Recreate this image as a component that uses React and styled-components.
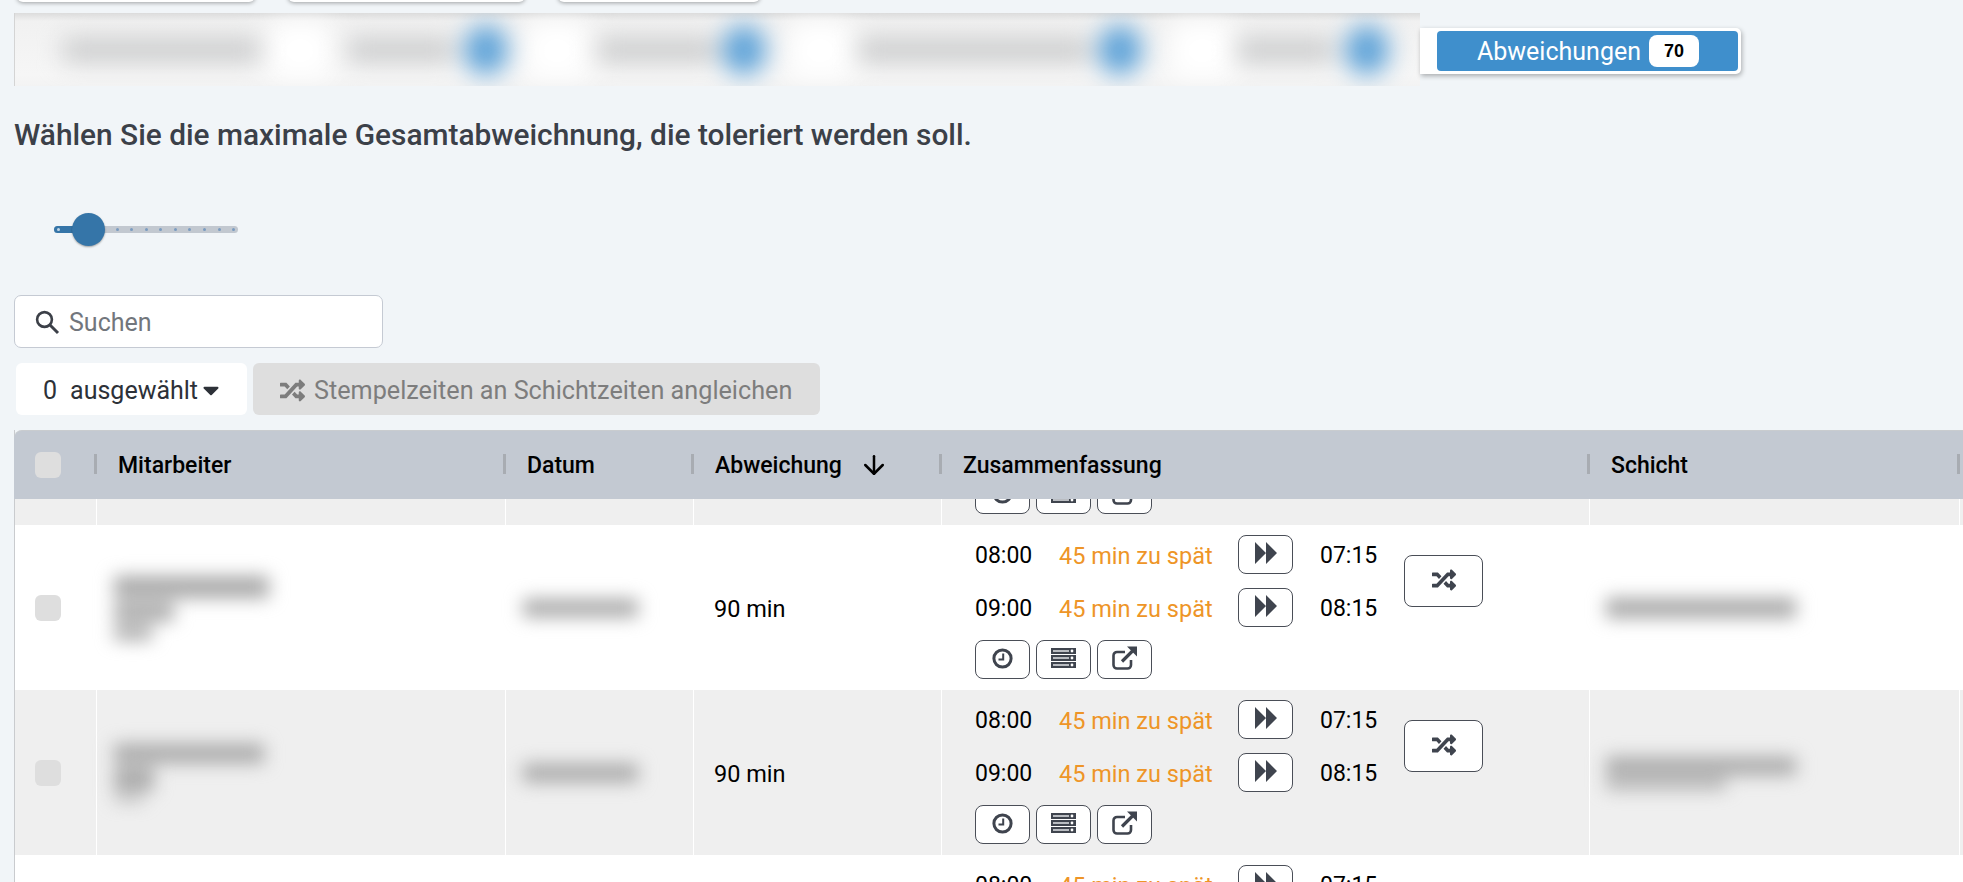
import React from 'react';
import styled, { createGlobalStyle } from 'styled-components';
import { FaRandom, FaCaretDown } from 'react-icons/fa';
import { FiArrowDown } from 'react-icons/fi';

const COLUMNS = '82px 409px 188px 248px 648px 370px 60px';

const GlobalStyle = createGlobalStyle`
  html, body {
    margin: 0;
    height: 882px;
    overflow: hidden;
    background: #f1f5f8;
    font-family: Roboto, "Liberation Sans", sans-serif;
  }
`;

const Page = styled.div`
  padding-left: 14px;
  width: 1963px;
  height: 882px;
  overflow: hidden;
  box-sizing: border-box;
`;

const TopCards = styled.div`
  display: flex;
  margin: -38px 0 0 3px;
`;

const TopCard = styled.div`
  width: ${p => p.$w}px;
  height: 40px;
  margin-right: 33px;
  background: #fff;
  border-radius: 6px;
  box-shadow: 0 1px 4px rgba(0, 0, 0, 0.35);
`;

const TabBar = styled.div`
  display: flex;
  margin-top: 11px;
  height: 73px;
`;

const BlurStrip = styled.div`
  width: 1406px;
  height: 73px;
  overflow: hidden;
  background: linear-gradient(#dcdcdc 0, #f1f1f1 8px, #f6f6f6 62px, #f3f3f3 100%);
  border-left: 1px solid #d4d4d4;
  box-sizing: border-box;
`;

const StripContent = styled.div`
  display: flex;
  align-items: center;
  height: 73px;
  padding-left: 9px;
  filter: blur(12px);
`;

const StripWhite = styled.div`
  width: ${p => p.$w}px;
  height: 56px;
  margin-left: ${p => p.$ml}px;
  background: #fff;
  flex-shrink: 0;
`;

const StripLabel = styled.div`
  width: ${p => p.$w}px;
  height: 22px;
  margin-left: ${p => p.$ml}px;
  background: #c8c9ca;
  flex-shrink: 0;
`;

const StripDot = styled.div`
  width: 44px;
  height: 50px;
  margin-left: ${p => p.$ml}px;
  border-radius: 50%;
  background: #5fa3d8;
  flex-shrink: 0;
`;

const DeviationCard = styled.div`
  display: flex;
  align-items: center;
  width: 321px;
  height: 46px;
  margin-top: 15px;
  padding: 0 3px 0 17px;
  box-sizing: border-box;
  background: #fff;
  border-radius: 0 5px 5px 0;
  box-shadow: 1px 2px 5px rgba(0, 0, 0, 0.3);
`;

const DeviationButton = styled.div`
  display: flex;
  align-items: center;
  justify-content: flex-end;
  width: 301px;
  height: 40px;
  padding-right: 39px;
  box-sizing: border-box;
  background: #3f8fcc;
  border-radius: 4px;
  color: #fff;
  font-size: 25px;
`;

const Badge = styled.span`
  display: flex;
  align-items: center;
  justify-content: center;
  width: 50px;
  height: 32px;
  margin-left: 8px;
  background: #fff;
  border-radius: 8px;
  color: #000;
  font-size: 18px;
  font-weight: 700;
  font-family: "Liberation Sans", Arial, sans-serif;
`;

const Heading = styled.h2`
  margin: 33px 0 0;
  height: 32px;
  color: #3b4048;
  font-size: 29.85px;
  line-height: 32px;
  font-weight: 500;
  white-space: nowrap;
`;

const SliderWrap = styled.div`
  position: relative;
  width: 184px;
  height: 7px;
  margin: 75px 0 0 40px;
  background: #c2c8d0;
  border-radius: 4px;
`;

const SliderFill = styled.div`
  width: 36px;
  height: 7px;
  background: #3575a8;
  border-radius: 4px 0 0 4px;
`;

const SliderThumb = styled.div`
  position: absolute;
  left: 17.5px;
  top: -13px;
  width: 33px;
  height: 33px;
  border-radius: 50%;
  background: #3575a8;
  box-shadow: 0 1px 2px rgba(0, 0, 0, 0.35);
`;

const SliderTick = styled.div`
  position: absolute;
  top: 2px;
  width: 3px;
  height: 3px;
  border-radius: 50%;
  background: ${p => (p.$on ? '#c2d6e6' : '#7a9cc0')};
`;

const SearchBox = styled.div`
  display: flex;
  align-items: center;
  width: 369px;
  height: 53px;
  margin-top: 62px;
  padding-left: 19px;
  box-sizing: border-box;
  background: #fff;
  border: 1px solid #c5cad3;
  border-radius: 7px;
`;

const SearchText = styled.span`
  margin-left: 9px;
  padding-top: 2px;
  color: #72767c;
  font-size: 25px;
`;

const Actions = styled.div`
  display: flex;
  gap: 6px;
  margin: 15px 0 0 2px;
`;

const SelectButton = styled.div`
  display: flex;
  align-items: center;
  width: 231px;
  height: 52px;
  padding: 2px 0 0 27px;
  box-sizing: border-box;
  background: #fff;
  border-radius: 6px;
  color: #2d3138;
  font-size: 25px;
`;

const SelectCount = styled.span`
  margin-right: 13px;
`;

const AlignButton = styled.div`
  display: flex;
  align-items: center;
  width: 567px;
  height: 52px;
  padding: 2px 0 0 27px;
  box-sizing: border-box;
  background: #dedede;
  border-radius: 6px;
  color: #7d7d7d;
  font-size: 25.2px;
  white-space: nowrap;

  svg {
    margin-right: 9px;
  }
`;

const Table = styled.div`
  margin-top: 15px;
  width: 1980px;
  border-left: 1px solid #c9cbce;
`;

const HeaderRow = styled.div`
  display: grid;
  grid-template-columns: ${COLUMNS};
  height: 69px;
  margin-left: -1px;
  padding-left: 1px;
  background: #c3c9d2;
  border-top: 1px solid #c9cccf;
  box-sizing: border-box;
  border-radius: 8px 0 0 0;
`;

const HeaderCell = styled.div`
  position: relative;
  display: flex;
  align-items: center;
  padding-left: 21px;
  color: #000;
  font-size: 23px;
  font-weight: 500;
  white-space: nowrap;

  &::before {
    content: ${p => (p.$first ? 'none' : '""')};
    position: absolute;
    left: -3px;
    top: 23px;
    width: 3px;
    height: 20px;
    background: #a8acb2;
  }
`;

const SortArrow = styled.span`
  display: flex;
  margin-left: 17px;
`;

const HeaderCheck = styled.div`
  width: 26px;
  height: 26px;
  margin-left: -1px;
  background: #dedede;
  border-radius: 6px;
`;

const Viewport = styled.div`
  height: 383px;
  overflow: hidden;
`;

const Rows = styled.div`
  margin-top: -139px;
`;

const Row = styled.div`
  display: grid;
  grid-template-columns: ${COLUMNS};
  height: 165px;
  background: ${p => (p.$alt ? '#efefef' : '#fff')};
`;

const Cell = styled.div`
  display: flex;
  align-items: center;
  box-sizing: border-box;
  min-width: 0;
  padding-left: ${p => p.$pl || 0}px;
  border-right: 1px solid ${p => (p.$last ? 'transparent' : '#fff')};
`;

const RowCheck = styled.div`
  width: 26px;
  height: 26px;
  background: #dedede;
  border-radius: 6px;
`;

const BlurStack = styled.div`
  display: flex;
  flex-direction: column;
  gap: ${p => p.$gap || 5}px;
  filter: blur(9px);
`;

const BlurBar = styled.div`
  width: ${p => p.$w}px;
  height: ${p => p.$h || 15}px;
  background: #a8a8a8;
`;

const AmountText = styled.span`
  padding-top: 2px;
  font-size: 23.5px;
  color: #000;
`;

const SummaryCell = styled(Cell)`
  flex-direction: column;
  align-items: flex-start;
  justify-content: flex-start;
  padding: 10px 0 0 33px;
`;

const SummaryTop = styled.div`
  display: flex;
  align-items: center;
`;

const Lines = styled.div`
  display: flex;
  flex-direction: column;
  gap: 14px;
  width: 429px;
`;

const Line = styled.div`
  display: flex;
  align-items: center;
  height: 39px;
  font-size: 23px;
  color: #000;

  > span {
    padding-top: 2px;
  }
`;

const Time = styled.span`
  width: 84px;
`;

const Late = styled.span`
  width: 179px;
  font-size: 23.5px;
  color: #ee9527;
  white-space: nowrap;
`;

const IconButton = styled.div`
  display: flex;
  align-items: center;
  justify-content: center;
  width: ${p => p.$w || 55}px;
  height: ${p => p.$h || 39}px;
  padding-bottom: 3px;
  box-sizing: border-box;
  flex-shrink: 0;
  background: #fff;
  border: 1px solid #4a4e57;
  border-radius: 8px;
  color: #3f444e;
`;

const ForwardButton = styled(IconButton)`
  margin-right: 27px;
`;

const Tools = styled.div`
  display: flex;
  gap: 6px;
  margin-top: 13px;
`;

const ForwardIcon = () => (
  <svg width="22" height="22" viewBox="0 0 22 22" fill="currentColor">
    <path d="M0 0l11 11L0 22zM11 0l11 11-11 11z" />
  </svg>
);

const ClockIcon = () => (
  <svg width="21" height="21" viewBox="0 0 21 21">
    <circle cx="10.5" cy="10.5" r="8.6" fill="none" stroke="currentColor" strokeWidth="3" />
    <path d="M11.2 5.5v6H6.5" fill="none" stroke="currentColor" strokeWidth="2" />
  </svg>
);

const ServerIcon = () => (
  <svg width="25" height="20" viewBox="0 0 25 20" fill="currentColor">
    {[0, 7, 14].map(y => (
      <g key={y}>
        <rect x="0" y={y} width="25" height="6" />
        <rect x="2" y={y + 2.2} width="16" height="1.6" fill="#d8dade" />
        <circle cx="21" cy={y + 3} r="1.4" fill="#fff" />
      </g>
    ))}
  </svg>
);

const ExternalIcon = () => (
  <svg width="25" height="24" viewBox="0 0 25 24">
    <path d="M19 14v5a3.5 3.5 0 0 1-3.5 3.5H5A3.5 3.5 0 0 1 1.5 19V9.5A3.5 3.5 0 0 1 5 6h8" fill="none" stroke="currentColor" strokeWidth="2.6" />
    <path d="M15 .5h10v10z" fill="currentColor" />
    <path d="M20.5 5L10 15.5" stroke="currentColor" strokeWidth="3.2" />
  </svg>
);

const SearchIcon = () => (
  <svg width="26" height="26" viewBox="0 0 26 26">
    <circle cx="10.5" cy="10.5" r="7.4" fill="none" stroke="#3c4048" strokeWidth="2.6" />
    <path d="M16 16l8 8" stroke="#3c4048" strokeWidth="3" />
  </svg>
);

const ticks = [2.5, 61.5, 75.5, 90.5, 104.5, 119.5, 133.5, 148.5, 163.5, 177.5];

const columns = [
  { label: 'Mitarbeiter' },
  { label: 'Datum' },
  { label: 'Abweichung', sorted: true },
  { label: 'Zusammenfassung' },
  { label: 'Schicht' },
  { label: '' },
];

const rows = [
  { id: 0, alt: true, name: [[155, 14], [60, 14]], shift: [[190, 20]] },
  { id: 1, alt: false, name: [[155, 22], [60, 18], [38, 14]], shift: [[190, 20]] },
  { id: 2, alt: true, name: [[150, 19], [40, 22], [30, 6]], shift: [[190, 18], [120, 10]] },
  { id: 3, alt: false, name: [[155, 14], [60, 14]], shift: [[190, 20]] },
];

const Summary = () => (
  <SummaryCell>
    <SummaryTop>
      <Lines>
        {[['08:00', '07:15'], ['09:00', '08:15']].map(([planned, actual]) => (
          <Line key={planned}>
            <Time>{planned}</Time>
            <Late>45 min zu spät</Late>
            <ForwardButton><ForwardIcon /></ForwardButton>
            <span>{actual}</span>
          </Line>
        ))}
      </Lines>
      <IconButton $w={79} $h={52}><FaRandom size={24} /></IconButton>
    </SummaryTop>
    <Tools>
      <IconButton><ClockIcon /></IconButton>
      <IconButton><ServerIcon /></IconButton>
      <IconButton><ExternalIcon /></IconButton>
    </Tools>
  </SummaryCell>
);

const App = () => (
  <Page>
    <GlobalStyle />
    <TopCards>
      <TopCard $w={238} />
      <TopCard $w={237} />
      <TopCard $w={202} />
    </TopCards>
    <TabBar>
      <BlurStrip>
        <StripContent>
          <StripLabel $w={197} $ml={39} />
          <StripWhite $w={60} $ml={10} />
          <StripLabel $w={105} $ml={18} />
          <StripDot $ml={11} />
          <StripWhite $w={60} $ml={19} />
          <StripLabel $w={118} $ml={11} />
          <StripDot $ml={6} />
          <StripWhite $w={60} $ml={24} />
          <StripLabel $w={230} $ml={9} />
          <StripDot $ml={9} />
          <StripWhite $w={60} $ml={30} />
          <StripLabel $w={96} $ml={5} />
          <StripDot $ml={12} />
        </StripContent>
      </BlurStrip>
      <DeviationCard>
        <DeviationButton>
          Abweichungen
          <Badge>70</Badge>
        </DeviationButton>
      </DeviationCard>
    </TabBar>
    <Heading>Wählen Sie die maximale Gesamtabweichnung, die toleriert werden soll.</Heading>
    <SliderWrap>
      <SliderFill />
      {ticks.map((left, i) => <SliderTick key={left} $on={i === 0} style={{ left }} />)}
      <SliderThumb />
    </SliderWrap>
    <SearchBox>
      <SearchIcon />
      <SearchText>Suchen</SearchText>
    </SearchBox>
    <Actions>
      <SelectButton>
        <SelectCount>0</SelectCount>
        ausgewählt
        <FaCaretDown size={26} />
      </SelectButton>
      <AlignButton>
        <FaRandom size={25} />
        Stempelzeiten an Schichtzeiten angleichen
      </AlignButton>
    </Actions>
    <Table>
      <HeaderRow>
        <HeaderCell $first><HeaderCheck /></HeaderCell>
        {columns.map(col => (
          <HeaderCell key={col.label}>
            {col.label}
            {col.sorted && <SortArrow><FiArrowDown size={30} /></SortArrow>}
          </HeaderCell>
        ))}
      </HeaderRow>
      <Viewport>
        <Rows>
          {rows.map(row => (
            <Row key={row.id} $alt={row.alt}>
              <Cell $pl={20}><RowCheck /></Cell>
              <Cell $pl={17}>
                <BlurStack>
                  {row.name.map(([w, h], i) => <BlurBar key={i} $w={w} $h={h} />)}
                </BlurStack>
              </Cell>
              <Cell $pl={17}>
                <BlurStack><BlurBar $w={115} $h={18} /></BlurStack>
              </Cell>
              <Cell $pl={20}><AmountText>90 min</AmountText></Cell>
              <Summary />
              <Cell $pl={16}>
                <BlurStack $gap={4}>
                  {row.shift.map(([w, h], i) => <BlurBar key={i} $w={w} $h={h} />)}
                </BlurStack>
              </Cell>
              <Cell $last />
            </Row>
          ))}
        </Rows>
      </Viewport>
    </Table>
  </Page>
);

export default App;
